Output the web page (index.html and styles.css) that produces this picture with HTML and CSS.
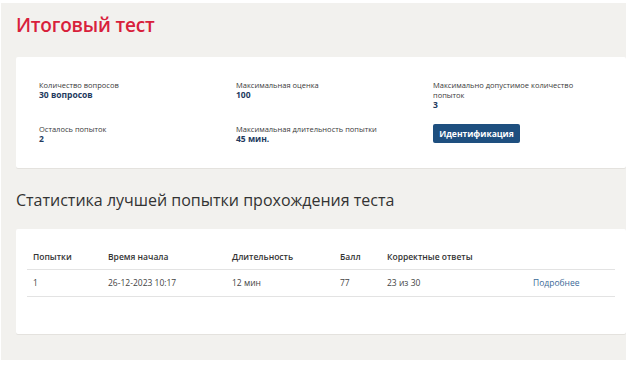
FILE: index.html
```html
<!DOCTYPE html>
<html lang="ru">
  <head>
    <meta charset="UTF-8" />
    <meta name="viewport" content="width=device-width, initial-scale=1.0" />
    <title>Итоговый тест</title>
    <link rel="stylesheet" href="styles.css">
  </head>
  <body>
    <div class="page">
      <h1 class="page-title">Итоговый тест</h1>

      <div class="card info-card">
        <div class="info-grid">
          <div class="info-item">
            <div class="label">Количество вопросов</div>
            <div class="value">30 вопросов</div>
          </div>
          <div class="info-item">
            <div class="label">Максимальная оценка</div>
            <div class="value">100</div>
          </div>
          <div class="info-item narrow">
            <div class="label">Максимально допустимое количество попыток</div>
            <div class="value">3</div>
          </div>

          <div class="info-item">
            <div class="label">Осталось попыток</div>
            <div class="value">2</div>
          </div>
          <div class="info-item">
            <div class="label">Максимальная длительность попытки</div>
            <div class="value">45 мин.</div>
          </div>
          <div class="info-item">
            <button class="btn-primary" type="button">Идентификация</button>
          </div>
        </div>
      </div>

      <h2 class="section-title">Статистика лучшей попытки прохождения теста</h2>

      <div class="card stats-card">
        <table class="stats-table">
          <colgroup>
            <col class="c-try" />
            <col class="c-start" />
            <col class="c-dur" />
            <col class="c-score" />
            <col class="c-correct" />
            <col />
          </colgroup>
          <thead>
            <tr>
              <th>Попытки</th>
              <th>Время начала</th>
              <th>Длительность</th>
              <th>Балл</th>
              <th>Корректные ответы</th>
              <th></th>
            </tr>
          </thead>
          <tbody>
            <tr>
              <td>1</td>
              <td>26-12-2023 10:17</td>
              <td>12 мин</td>
              <td>77</td>
              <td>23 из 30</td>
              <td><a class="more-link" href="#">Подробнее</a></td>
            </tr>
          </tbody>
        </table>
      </div>
    </div>
  </body>
</html>
```

FILE: styles.css
```css
* {
  box-sizing: border-box;
  margin: 0;
  padding: 0;
}

body {
  background: #ffffff;
  font-family: "Open Sans", "Noto Sans", sans-serif;
  color: #333333;
}

.page {
  width: 625px;
  height: 357px;
  margin: 3px 0 0 1px;
  padding: 8px 0 0 15px;
  background: #f2f1ee;
}

.page-title {
  font-size: 19px;
  line-height: 28px;
  font-weight: 600;
  color: #d8203b;
  letter-spacing: -0.2px;
}

.card {
  background: #ffffff;
  border-radius: 2px;
  box-shadow: 0 1px 0 #e4e2de;
}

.info-card {
  margin-top: 18px;
  padding: 23px 0 24px 23px;
}

.info-grid {
  display: grid;
  grid-template-columns: 197px 197px 150px;
  row-gap: 14px;
  align-items: start;
}

.label {
  font-size: 7.5px;
  line-height: 10px;
  color: #3a3a3a;
}

.value {
  font-size: 8.5px;
  line-height: 10px;
  font-weight: 700;
  color: #233a5e;
}

.btn-primary {
  display: block;
  width: 87px;
  height: 19px;
  border: none;
  border-radius: 2px;
  background: #1e4f7f;
  color: #ffffff;
  font-family: inherit;
  font-size: 8.5px;
  font-weight: 700;
  cursor: pointer;
}

.section-title {
  margin-top: 20px;
  font-size: 16px;
  line-height: 24px;
  font-weight: 400;
  color: #333333;
}

.stats-card {
  margin-top: 17px;
  padding: 15px 10px 37px 11px;
}

.stats-table {
  width: 588px;
  border-collapse: collapse;
  table-layout: fixed;
  font-size: 8.5px;
}

.c-try { width: 75px; }
.c-start { width: 124px; }
.c-dur { width: 108px; }
.c-score { width: 47px; }
.c-correct { width: 146px; }

.stats-table th {
  height: 25px;
  padding: 0 6px;
  text-align: left;
  font-weight: 600;
  color: #333333;
  border-bottom: 1px solid #e3e3e3;
}

.stats-table td {
  height: 27px;
  padding: 0 6px;
  color: #444444;
  border-bottom: 1px solid #e3e3e3;
}

.more-link {
  color: #3b6a98;
  text-decoration: none;
}
```
